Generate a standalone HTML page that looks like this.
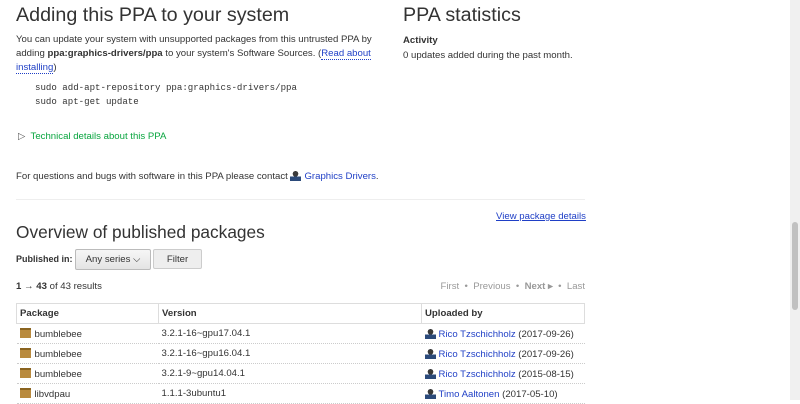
<!DOCTYPE html><html><head><style>
body{margin:0;width:800px;height:400px;overflow:hidden;background:#fff;font-family:"Liberation Sans",sans-serif;color:#333;font-size:9.6px;position:relative}
.a{position:absolute;white-space:nowrap}
h1{font-weight:normal;font-size:17.3px;margin:0;color:#333}
a{color:#1f3fc6;text-decoration:none}
.pk{display:inline-block;width:11px;height:10px;background:#b98a3e;border-top:2px solid #8a6420;box-sizing:border-box;vertical-align:-1px;margin-right:4px}
.pe{display:inline-block;width:11px;height:11px;vertical-align:-2px;margin-right:3px;background:radial-gradient(circle at 50% 35%,#3a3a3a 30%,transparent 32%),linear-gradient(transparent 60%,#2b4a7a 60%)}
td{height:20px;border-bottom:1px dotted #ccc;padding:0 0 0 3px;font-size:9.6px;box-sizing:border-box;vertical-align:middle}
th{text-align:left;height:19px;padding:0 0 0 3px;border:1px solid #ddd;font-size:9.6px}
table{border-collapse:collapse;table-layout:fixed}
</style></head><body>
<div class="a" style="left:16px;top:4px"><h1 style="font-size:19.7px">Adding this PPA to your system</h1></div>
<div class="a" style="left:16px;top:33px;line-height:14px">You can update your system with unsupported packages from this untrusted PPA by<br>adding <b>ppa:graphics-drivers/ppa</b> to your system's Software Sources. (<a style="border-bottom:1px dotted #1f3fc6">Read about</a><br><a style="border-bottom:1px dotted #1f3fc6">installing</a>)</div>
<div class="a" style="left:35px;top:81px;font-family:'Liberation Mono',monospace;font-size:9.1px;line-height:14px">sudo add-apt-repository ppa:graphics-drivers/ppa<br>sudo apt-get update</div>
<div class="a" style="left:18px;top:131px;color:#09a53f"><span style="color:#555">▷</span>&nbsp; Technical details about this PPA</div>
<div class="a" style="left:16px;top:170px">For questions and bugs with software in this PPA please contact <span class="pe"></span><a>Graphics Drivers</a>.</div>
<div class="a" style="left:16px;top:199px;width:569px;border-top:1px solid #eee"></div>
<div class="a" style="left:403px;top:4px"><h1 style="font-size:19.7px">PPA statistics</h1></div>
<div class="a" style="left:403px;top:33px;line-height:15px"><b>Activity</b><br>0 updates added during the past month.</div>
<div class="a" style="left:496px;top:211px"><a style="text-decoration:underline">View package details</a></div>
<div class="a" style="left:16px;top:222px"><h1>Overview of published packages</h1></div>
<div class="a" style="left:16px;top:254px;font-size:9px"><b>Published in:</b></div>
<div class="a" style="left:75px;top:249px;width:74px;height:19px;border:1px solid #bbb;border-radius:2px;background:linear-gradient(#f6f6f6,#e4e4e4);text-align:center;line-height:19px">Any series ⌵</div>
<div class="a" style="left:153px;top:249px;width:47px;height:18px;border:1px solid #ccc;border-radius:2px;background:#eee;text-align:center;line-height:19px">Filter</div>
<div class="a" style="left:16px;top:281px"><b>1 → 43</b> of 43 results</div>
<div class="a" style="right:215px;top:281px;color:#999">First &nbsp;•&nbsp; Previous &nbsp;•&nbsp; <b>Next ▸</b> &nbsp;•&nbsp; Last</div>
<table class="a" style="left:16px;top:303px;width:569px">
<colgroup><col style="width:142px"><col style="width:263px"><col></colgroup>
<tr><th>Package</th><th>Version</th><th>Uploaded by</th></tr>
<tr><td><span class="pk"></span>bumblebee</td><td>3.2.1-16~gpu17.04.1</td><td><span class="pe"></span><a>Rico Tzschichholz</a> (2017-09-26)</td></tr>
<tr><td><span class="pk"></span>bumblebee</td><td>3.2.1-16~gpu16.04.1</td><td><span class="pe"></span><a>Rico Tzschichholz</a> (2017-09-26)</td></tr>
<tr><td><span class="pk"></span>bumblebee</td><td>3.2.1-9~gpu14.04.1</td><td><span class="pe"></span><a>Rico Tzschichholz</a> (2015-08-15)</td></tr>
<tr><td><span class="pk"></span>libvdpau</td><td>1.1.1-3ubuntu1</td><td><span class="pe"></span><a>Timo Aaltonen</a> (2017-05-10)</td></tr>
</table>
<div class="a" style="left:790px;top:0;width:10px;height:400px;background:#f0f0f0"></div>
<div class="a" style="left:792px;top:222px;width:6px;height:88px;background:#c1c1c1;border-radius:3px"></div>
</body></html>
